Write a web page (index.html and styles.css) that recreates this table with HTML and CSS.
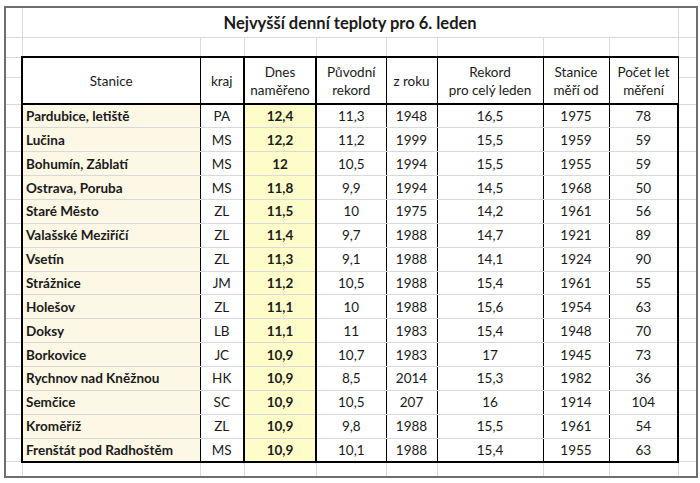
FILE: index.html
```html
<!DOCTYPE html>
<html lang="cs">
<head>
<meta charset="utf-8">
<title>Nejvyšší denní teploty pro 6. leden</title>
<link rel="stylesheet" href="styles.css">
</head>
<body>
<div class="sheet">
<table class="grid">
<colgroup>
<col class="w-strip"><col class="w-stanice"><col class="w-kraj"><col class="w-dnes"><col class="w-puv"><col class="w-rok"><col class="w-rekord"><col class="w-od"><col class="w-pocet"><col class="w-rstrip">
</colgroup>
<tr class="r-title"><td class="first"></td><td class="title" colspan="8">Nejvyšší denní teploty pro 6. leden</td><td class="last"></td></tr>
<tr class="r-empty"><td class="first"></td><td></td><td></td><td></td><td></td><td></td><td></td><td></td><td></td><td class="last"></td></tr>
<tr class="r-h1"><td class="first"></td>
<th rowspan="2" class="h c-stanice-h">Stanice</th>
<th rowspan="2" class="h">kraj</th>
<th rowspan="2" class="h c-dnes-h">Dnes<br>naměřeno</th>
<th rowspan="2" class="h">Původní<br>rekord</th>
<th rowspan="2" class="h">z roku</th>
<th rowspan="2" class="h">Rekord<br>pro celý leden</th>
<th rowspan="2" class="h">Stanice<br>měří od</th>
<th rowspan="2" class="h c-end">Počet let<br>měření</th>
<td class="last"></td></tr>
<tr class="r-h2"><td class="first"></td><td class="last"></td></tr>
<tr class="r-d"><td class="first"></td><td class="d st">Pardubice, letiště</td><td class="d">PA</td><td class="d dn">12,4</td><td class="d">11,3</td><td class="d">1948</td><td class="d">16,5</td><td class="d">1975</td><td class="d c-end">78</td><td class="last"></td></tr>
<tr class="r-d"><td class="first"></td><td class="d st">Lučina</td><td class="d">MS</td><td class="d dn">12,2</td><td class="d">11,2</td><td class="d">1999</td><td class="d">15,5</td><td class="d">1959</td><td class="d c-end">59</td><td class="last"></td></tr>
<tr class="r-d"><td class="first"></td><td class="d st">Bohumín, Záblatí</td><td class="d">MS</td><td class="d dn">12</td><td class="d">10,5</td><td class="d">1994</td><td class="d">15,5</td><td class="d">1955</td><td class="d c-end">59</td><td class="last"></td></tr>
<tr class="r-d"><td class="first"></td><td class="d st">Ostrava, Poruba</td><td class="d">MS</td><td class="d dn">11,8</td><td class="d">9,9</td><td class="d">1994</td><td class="d">14,5</td><td class="d">1968</td><td class="d c-end">50</td><td class="last"></td></tr>
<tr class="r-d"><td class="first"></td><td class="d st">Staré Město</td><td class="d">ZL</td><td class="d dn">11,5</td><td class="d">10</td><td class="d">1975</td><td class="d">14,2</td><td class="d">1961</td><td class="d c-end">56</td><td class="last"></td></tr>
<tr class="r-d"><td class="first"></td><td class="d st">Valašské Meziříčí</td><td class="d">ZL</td><td class="d dn">11,4</td><td class="d">9,7</td><td class="d">1988</td><td class="d">14,7</td><td class="d">1921</td><td class="d c-end">89</td><td class="last"></td></tr>
<tr class="r-d"><td class="first"></td><td class="d st">Vsetín</td><td class="d">ZL</td><td class="d dn">11,3</td><td class="d">9,1</td><td class="d">1988</td><td class="d">14,1</td><td class="d">1924</td><td class="d c-end">90</td><td class="last"></td></tr>
<tr class="r-d"><td class="first"></td><td class="d st">Strážnice</td><td class="d">JM</td><td class="d dn">11,2</td><td class="d">10,5</td><td class="d">1988</td><td class="d">15,4</td><td class="d">1961</td><td class="d c-end">55</td><td class="last"></td></tr>
<tr class="r-d"><td class="first"></td><td class="d st">Holešov</td><td class="d">ZL</td><td class="d dn">11,1</td><td class="d">10</td><td class="d">1988</td><td class="d">15,6</td><td class="d">1954</td><td class="d c-end">63</td><td class="last"></td></tr>
<tr class="r-d"><td class="first"></td><td class="d st">Doksy</td><td class="d">LB</td><td class="d dn">11,1</td><td class="d">11</td><td class="d">1983</td><td class="d">15,4</td><td class="d">1948</td><td class="d c-end">70</td><td class="last"></td></tr>
<tr class="r-d"><td class="first"></td><td class="d st">Borkovice</td><td class="d">JC</td><td class="d dn">10,9</td><td class="d">10,7</td><td class="d">1983</td><td class="d">17</td><td class="d">1945</td><td class="d c-end">73</td><td class="last"></td></tr>
<tr class="r-d"><td class="first"></td><td class="d st">Rychnov nad Kněžnou</td><td class="d">HK</td><td class="d dn">10,9</td><td class="d">8,5</td><td class="d">2014</td><td class="d">15,3</td><td class="d">1982</td><td class="d c-end">36</td><td class="last"></td></tr>
<tr class="r-d"><td class="first"></td><td class="d st">Semčice</td><td class="d">SC</td><td class="d dn">10,9</td><td class="d">10,5</td><td class="d">207</td><td class="d">16</td><td class="d">1914</td><td class="d c-end">104</td><td class="last"></td></tr>
<tr class="r-d"><td class="first"></td><td class="d st">Kroměříž</td><td class="d">ZL</td><td class="d dn">10,9</td><td class="d">9,8</td><td class="d">1988</td><td class="d">15,5</td><td class="d">1961</td><td class="d c-end">54</td><td class="last"></td></tr>
<tr class="r-d r-lastd"><td class="first"></td><td class="d st">Frenštát pod Radhoštěm</td><td class="d">MS</td><td class="d dn">10,9</td><td class="d">10,1</td><td class="d">1988</td><td class="d">15,4</td><td class="d">1955</td><td class="d c-end">63</td><td class="last"></td></tr>
<tr class="r-bottom"><td class="first"></td><td></td><td></td><td></td><td></td><td></td><td></td><td></td><td></td><td class="last"></td></tr>
</table>
</div>
</body>
</html>
```
FILE: styles.css
```css
* { box-sizing: border-box; }
body {
  margin: 0;
  background: #ffffff;
  font-family: Lato, "Liberation Sans", sans-serif;
  color: #1a1a1a;
}
.sheet {
  margin: 6px 0 0 4px;
  width: 694px;
  height: 472px;
  border: 2px solid #6e6e6e;
  overflow: hidden;
  background: #fff;
}
.grid {
  border-collapse: collapse;
  table-layout: fixed;
  width: 690px;
}
.grid td, .grid th {
  border: 1px solid #d9d9d9;
  padding: 0;
  font-weight: normal;
}
.w-strip { width: 16px; }
.w-stanice { width: 178px; }
.w-kraj { width: 44px; }
.w-dnes { width: 72px; }
.w-puv { width: 70px; }
.w-rok { width: 51px; }
.w-rekord { width: 106px; }
.w-od { width: 66px; }
.w-pocet { width: 69px; }
.w-rstrip { width: 18px; }

.grid tr.r-title td { border-top: none; }
.grid td.first { border-left: none; }
.grid td.last { border-right: none; }

.r-title td { height: 29px; }
.r-empty td { height: 20px; }
.r-h1 td { height: 20px; }
.r-h2 td { height: 27px; }
.r-d td { height: 23.87px; }
.r-bottom td { height: 14px; border-bottom: none; }

.grid td.title {
  text-align: center;
  vertical-align: middle;
  font-weight: 700;
  font-size: 16.5px;
  padding-top: 2px;
}
.grid th.h {
  border: 1px solid #000;
  border-top: 2px solid #000;
  border-bottom: 2px solid #000;
  font-size: 13.5px;
  line-height: 18px;
  text-align: center;
  vertical-align: middle;
  background: #fff;
}
.grid th.c-stanice-h, .grid td.st { border-left: 2px solid #000; }
.grid th.c-dnes-h, .grid td.dn { border-left: 2px solid #000; border-right: 2px solid #000; }
.grid .c-end { border-right: 2px solid #000; }

.grid td.d {
  border-left: 1px solid #000;
  border-right: 1px solid #000;
  font-size: 13.5px;
  text-align: center;
  vertical-align: middle;
  background: #fff;
}
.grid td.d.st {
  border-left: 2px solid #000;
  text-align: left;
  padding-left: 3px;
  font-weight: 700;
  background: #fdf7e5;
}
.grid td.d.dn {
  border-left: 2px solid #000;
  border-right: 2px solid #000;
  font-weight: 700;
  background: #fefdc9;
}
.grid td.d.c-end { border-right: 2px solid #000; }
.grid tr.r-lastd td.d { border-bottom: 2px solid #000; }
```
